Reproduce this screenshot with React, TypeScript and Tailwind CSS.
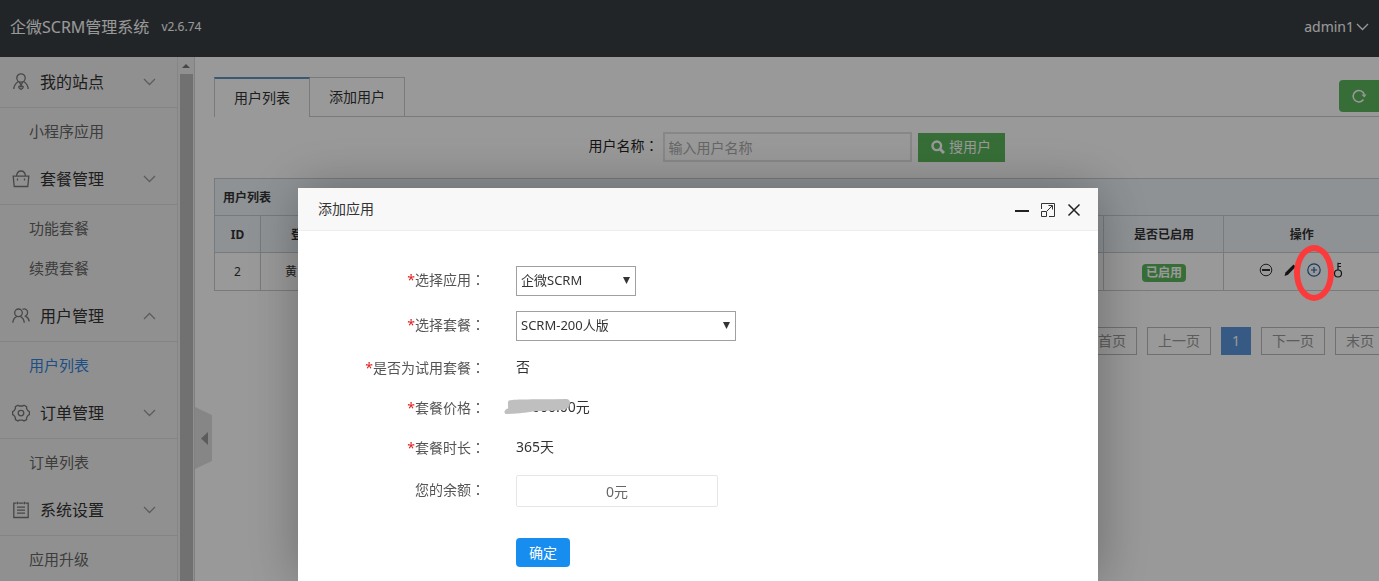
import React, { useState } from 'react';
import clsx from 'clsx';

interface MenuGroup {
  title: string;
  icon: React.ReactNode;
  open?: boolean;
  items: string[];
}

const iconProps = {
  width: 18,
  height: 18,
  viewBox: '0 0 18 18',
  fill: 'none',
  stroke: 'currentColor',
  strokeWidth: 1.3,
  'aria-hidden': true,
};

const SiteIcon = () => (
  <svg {...iconProps}>
    <circle cx="9" cy="5" r="4.2" />
    <path d="M6.500 8.500C4 10 2 12.500 1.800 16M11.500 8.500c2.500 1.500 4.500 4 4.700 7.500M7.200 9l2.600 4.300M10.800 9l-2.600 4.300M9 16.500c-1.500-.8-2.300-1.500-2.300-2.400 0-1.100 1.500-1.400 2.300-.3.800-1.100 2.300-.8 2.300.3 0 .9-.8 1.600-2.300 2.400z" />
  </svg>
);

const BagIcon = () => (
  <svg {...iconProps}>
    <path d="M1.200 6.200h15.600l-1 10.300H2.200zM4.500 6.200C4.800 3 6.500 1 9 1s4.200 2 4.500 5.200M5.500 8.500v2M12.500 8.500v2" />
  </svg>
);

const UsersIcon = () => (
  <svg {...iconProps}>
    <circle cx="6.500" cy="5.800" r="3.800" />
    <path d="M.8 15.800c.3-3.400 1.700-5.300 4-6.300M8.300 9.300c2.400 1.200 3.700 3.200 4 6.500M10.500 2.300c2.900-1.100 5.100.6 5.100 3.200 0 1.700-.8 2.900-2.100 3.600 2.200 1 3.400 2.700 3.700 5.400" />
  </svg>
);

const OrderIcon = () => (
  <svg {...iconProps}>
    <path d="M6 1.200 7.300 2h3.400L12 1.200 14.600 2.700v1.800l1.400 2.300 1.400.9v2.800l-1.400.9-1.400 2.300v1.800L12 16.900l-1.300-.7H7.300l-1.300.7-2.600-1.400v-1.800L2 11.400.6 10.500V7.700L2 6.800l1.400-2.300V2.700z" />
    <circle cx="9" cy="9.100" r="2.800" />
  </svg>
);

const SettingIcon = () => (
  <svg {...iconProps}>
    <path d="M4.500 2.200H1.800v14.300h14.400V2.200h-2.700M6.500 2.200h5M5.500.8v2.400M12.500.8v2.400M5 6.200h8M5 9.200h8M5 12.200h8" />
  </svg>
);

const menu: MenuGroup[] = [
  { title: '我的站点', icon: <SiteIcon />, items: ['小程序应用'] },
  { title: '套餐管理', icon: <BagIcon />, items: ['功能套餐', '续费套餐'] },
  { title: '用户管理', icon: <UsersIcon />, open: true, items: ['用户列表'] },
  { title: '订单管理', icon: <OrderIcon />, items: ['订单列表'] },
  { title: '系统设置', icon: <SettingIcon />, items: ['应用升级'] },
];

const Chevron = ({ up }: { up?: boolean }) => (
  <svg width="13" height="8" viewBox="0 0 13 8" fill="none" stroke="currentColor" strokeWidth="1.3" aria-hidden="true">
    <path d={up ? 'M1 7l5.500-5.500L12 7' : 'M1 1l5.500 5.500L12 1'} />
  </svg>
);

// Full-width colon, centred in its box (the zh-CN form sits at the left)
const Colon = () => <span lang="zh-TW" className="font-['Noto_Sans_CJK_TC',sans-serif] leading-none">：</span>;

const Sidebar = () => (
  <aside className="flex w-[195px] shrink-0 border-r border-[#d8d8d8] bg-[#f1f1f1]">
    <nav className="flex-1 overflow-hidden pt-0.5">
      {menu.map(group => (
        <section key={group.title}>
          <button className="flex h-[49px] w-full items-center border-b border-[#dcdcdc] pr-[21px] pb-0.5 pl-3 text-base text-[#333]">
            <span className="text-[#777]">{group.icon}</span>
            <span className="ml-2.5">{group.title}</span>
            <span className="ml-auto text-[#999]"><Chevron up={group.open} /></span>
          </button>
          <ul className="py-1">
            {group.items.map(item => (
              <li key={item}>
                <a
                  href="#"
                  className={clsx(
                    'flex h-10 items-center pl-[29px] text-[15px]',
                    item === '用户列表' ? 'text-[#3382e0]' : 'text-[#666]'
                  )}
                >
                  {item}
                </a>
              </li>
            ))}
          </ul>
        </section>
      ))}
    </nav>
    {/* Scrollbar */}
    <div className="flex w-[17px] flex-col items-center border-l border-[#e0e0e0]">
      <div className="flex h-[17px] items-center">
        <svg width="8" height="4" viewBox="0 0 8 4" aria-hidden="true"><path d="M0 4l4-4 4 4z" fill="#777" /></svg>
      </div>
      <div className="w-[13px] flex-1 bg-[#bdbdbd]" />
    </div>
  </aside>
);

const UserTable = () => (
  <table className="mt-4 w-full table-fixed border-collapse text-xs text-[#333]">
    <colgroup>
      <col className="w-[46px]" />
      <col className="w-[98px]" />
      <col />
      <col className="w-[120px]" />
      <col className="w-[155px]" />
    </colgroup>
    <thead className="bg-[#edf4f9] font-bold">
      <tr className="h-[37px]">
        <th colSpan={5} className="border border-r-0 border-[#c6cdd1] pt-0.5 pl-2 text-left">用户列表</th>
      </tr>
      <tr className="h-[37px]">
        <th className="border border-[#c6cdd1] pt-0.5">ID</th>
        <th className="border border-[#c6cdd1] pt-0.5 pl-[30px] text-left">登录名</th>
        <th className="border border-[#c6cdd1]"></th>
        <th className="border border-[#c6cdd1] pt-0.5">是否已启用</th>
        <th className="border border-r-0 border-[#c6cdd1] pt-0.5">操作</th>
      </tr>
    </thead>
    <tbody>
      <tr className="h-[38px]">
        <td className="border border-[#ccc] text-center">2</td>
        <td className="border border-[#ccc] pl-6">黄</td>
        <td className="border border-[#ccc]"></td>
        <td className="border border-[#ccc] pt-0.5 text-center">
          <span className="inline-block rounded bg-[#5cb85c] px-1 leading-[18px] font-bold text-white">已启用</span>
        </td>
        <td className="border border-r-0 border-[#ccc] pb-1">
          <div className="flex items-center justify-center gap-2.5">
            <button aria-label="禁用">
              <svg width="14" height="14" viewBox="0 0 14 14" fill="none" stroke="currentColor" aria-hidden="true">
                <circle cx="7" cy="7" r="5.800" />
                <path d="M3 7h8" strokeWidth="2" />
              </svg>
            </button>
            <button aria-label="编辑">
              <svg width="14" height="14" viewBox="0 0 14 14" fill="#222" aria-hidden="true">
                <path d="M1.500 13l1-3.500L10.500 1.500l2.200 2.200L5 11.700z" />
              </svg>
            </button>
            <button aria-label="添加应用" className="relative text-[#2a5f9e]">
              <svg width="14" height="14" viewBox="0 0 14 14" fill="none" stroke="currentColor" strokeWidth="1.200" aria-hidden="true">
                <circle cx="7" cy="7" r="6.200" />
                <path d="M4 7h6M7 4v6" />
              </svg>
              <span className="absolute top-[10px] left-1/2 z-20 h-14 w-10 -translate-1/2 rounded-[50%] border-[6px] border-[#fb3b3b]" />
            </button>
            <button aria-label="重置密码">
              <svg width="14" height="16" viewBox="0 0 14 16" fill="none" stroke="#222" strokeWidth="1.200" aria-hidden="true">
                <circle cx="7" cy="11.500" r="3.500" />
                <path d="M7 8V.8M7 1.500h3M7 4.500h3" />
              </svg>
            </button>
          </div>
        </td>
      </tr>
    </tbody>
  </table>
);

const Pagination = () => (
  <div className="-mr-1.5 mt-9 flex justify-end gap-2.5 text-sm">
    {['首页', '上一页', '1', '下一页', '末页'].map(label => (
      <button
        key={label}
        className={clsx(
          'h-7 border px-2.5',
          label === '1' ? 'border-[#5b97dd] bg-[#5b97dd] text-white' : 'border-[#bbb] text-[#999]'
        )}
      >
        {label}
      </button>
    ))}
  </div>
);

interface FieldProps {
  label: string;
  htmlFor: string;
  required?: boolean;
  className?: string;
  children: React.ReactNode;
}

const Field = ({ label, htmlFor, required = true, className = 'h-10', children }: FieldProps) => (
  <div className={clsx('flex items-center gap-[31px]', className)}>
    <label htmlFor={htmlFor} className="w-[187px] pb-0.5 text-right text-[#555]">
      {required && <span className="text-[#e02020]">*</span>}
      {label}
      <Colon />
    </label>
    {children}
  </div>
);

interface SelectBoxProps {
  id: string;
  options: string[];
  className: string;
}

const SelectBox = ({ id, options, className }: SelectBoxProps) => (
  <div className={clsx('relative', className)}>
    <select id={id} className="h-[30px] w-full appearance-none border border-[#a0a0a0] bg-white pl-1 text-[13px] text-[#333]">
      {options.map(o => <option key={o}>{o}</option>)}
    </select>
    <svg className="pointer-events-none absolute top-[11px] right-1.5" width="7" height="7" viewBox="0 0 7 7" aria-hidden="true">
      <path d="M0 0h7L3.500 7z" fill="#333" />
    </svg>
  </div>
);

const AddAppDialog = ({ onClose }: { onClose: () => void }) => (
  <div role="dialog" aria-label="添加应用" className="w-[800px] bg-white text-sm text-[#333] shadow-[1px_1px_50px_rgba(0,0,0,0.3)]">
    <div className="flex h-[43px] items-center border-b border-[#eee] bg-[#f8f8f8] pr-[17px] pl-5">
      <h2 className="flex-1">添加应用</h2>
      <div className="flex items-center gap-3 pt-0.5">
        <button aria-label="最小化">
          <svg width="14" height="14" viewBox="0 0 14 14" stroke="#222" strokeWidth="2" aria-hidden="true"><path d="M0 8h14" /></svg>
        </button>
        <button aria-label="最大化">
          <svg width="14" height="14" viewBox="0 0 14 14" fill="none" stroke="#333" aria-hidden="true">
            <path d="M.5 6V.5h13v13H8M.5 8.500h5v5h-5zM6 8l5-5M7.500 2.500h4v4" />
          </svg>
        </button>
        <button aria-label="关闭" onClick={onClose}>
          <svg width="14" height="14" viewBox="0 0 14 14" stroke="#222" strokeWidth="1.500" aria-hidden="true">
            <path d="M1.500 1.500l11 11M12.500 1.500l-11 11" />
          </svg>
        </button>
      </div>
    </div>

    <form className="pt-7" onSubmit={e => e.preventDefault()}>
      <Field label="选择应用" htmlFor="app" className="h-[45px] pb-0.5">
        <SelectBox id="app" options={['企微SCRM']} className="w-[120px]" />
      </Field>
      <Field label="选择套餐" htmlFor="plan" className="h-[45px] pb-0.5">
        <SelectBox id="plan" options={['SCRM-200人版']} className="w-[220px]" />
      </Field>
      <Field label="是否为试用套餐" htmlFor="trial">
        <output id="trial" className="pb-1">否</output>
      </Field>
      <Field label="套餐价格" htmlFor="price">
        <output id="price" className="relative pb-1">
          00000.00元
          {/* Smudge that hides the amount */}
          <svg className="absolute top-0.5 -left-3" width="67" height="16" viewBox="0 0 67 16" aria-hidden="true">
            <path d="M5 1.500C7 .3 30 .2 50 .2L62 0c4 0 5 3.500 3 7.500-2 3-6 3.500-10 3.700-10 .4-20 .6-26 1.300-9 1.600-18 2.500-27 2.500C-.5 14 0 10.500 4 9.500 4.500 7 3 3 5 1.500z" fill="#bfbfbf" />
          </svg>
        </output>
      </Field>
      <Field label="套餐时长" htmlFor="duration">
        <output id="duration" className="pb-1">365天</output>
      </Field>
      <Field label="您的余额" htmlFor="balance" required={false} className="h-11">
        <input id="balance" readOnly value="0元" className="h-8 w-[202px] rounded-xs border border-[#e6e6e6] text-center text-[#666]" />
      </Field>
      <button type="submit" className="mt-[25px] ml-[218px] h-[29px] rounded-sm bg-[#188df0] px-[13px] text-white">确定</button>
    </form>
  </div>
);

export default function App() {
  const [dialogOpen, setDialogOpen] = useState(true);

  return (
    <div className="flex h-screen flex-col overflow-hidden bg-white font-['Noto_Sans','Noto_Sans_CJK_SC',sans-serif] text-sm" lang="zh-CN">
      <header className="flex h-[57px] shrink-0 items-center bg-[#393f44] px-2.5 pb-1 text-white">
        <h1 className="text-base">企微SCRM管理系统</h1>
        <span className="ml-3 text-xs">v2.6.74</span>
        <button className="ml-auto flex items-center gap-0.5">
          admin1
          <Chevron />
        </button>
      </header>

      <div className="flex min-h-0 flex-1">
        <Sidebar />
        <main className="relative min-w-0 flex-1 overflow-hidden pt-5 pl-[19px]">
          {/* Collapse handle */}
          <button aria-label="收起菜单" className="absolute top-[350px] left-0">
            <svg width="17" height="62" viewBox="0 0 17 62" aria-hidden="true">
              <path d="M0 0l17 8v46L0 62z" fill="#e0e0e0" />
              <path d="M13 25v13l-7-6.500z" fill="#999" />
            </svg>
          </button>

          <div className="flex border-b border-[#ccc]">
            <button className="-mb-px h-10 w-24 border-x border-t-2 border-x-[#ccc] border-t-[#5f93bd] bg-white text-[#333]">用户列表</button>
            <button className="h-[39px] w-[95px] border-t border-r border-[#ccc] text-[#333]">添加用户</button>
            <button aria-label="刷新" className="mt-[3px] ml-auto flex h-8 w-10 items-center justify-center rounded-l bg-[#5cb85c] text-white">
              <svg width="15" height="14" viewBox="0 0 15 14" fill="none" stroke="currentColor" strokeWidth="1.500" aria-hidden="true">
                <path d="M12.300 5.500A5.700 5.700 0 1 0 11.500 10.500" />
                <path d="M9.500 5.500h5l-2.200 3z" fill="currentColor" stroke="none" />
              </svg>
            </button>
          </div>

          <form className="mt-[15px] flex items-center justify-center" onSubmit={e => e.preventDefault()}>
            <label htmlFor="username" className="pb-0.5 text-[#222]">用户名称<Colon /></label>
            <input
              id="username"
              placeholder="输入用户名称"
              className="ml-1 h-[30px] w-[249px] border-2 border-[#e2e2e2] bg-white px-1 placeholder:text-[#aaa]"
            />
            <button className="ml-1.5 flex h-[29px] w-[87px] items-center justify-center gap-1 bg-[#5cb85c] text-white">
              <svg width="14" height="14" viewBox="0 0 14 14" fill="none" stroke="currentColor" strokeWidth="2.400" aria-hidden="true">
                <circle cx="5.800" cy="5.800" r="4.300" />
                <path d="M9 9l4 4" strokeWidth="3" />
              </svg>
              搜用户
            </button>
          </form>

          <UserTable />
          <Pagination />
        </main>
      </div>

      {dialogOpen && (
        <div className="fixed inset-0 z-10 flex justify-center overflow-hidden bg-black/40 pt-[188px] pl-[17px]">
          <AddAppDialog onClose={() => setDialogOpen(false)} />
        </div>
      )}
    </div>
  );
}
